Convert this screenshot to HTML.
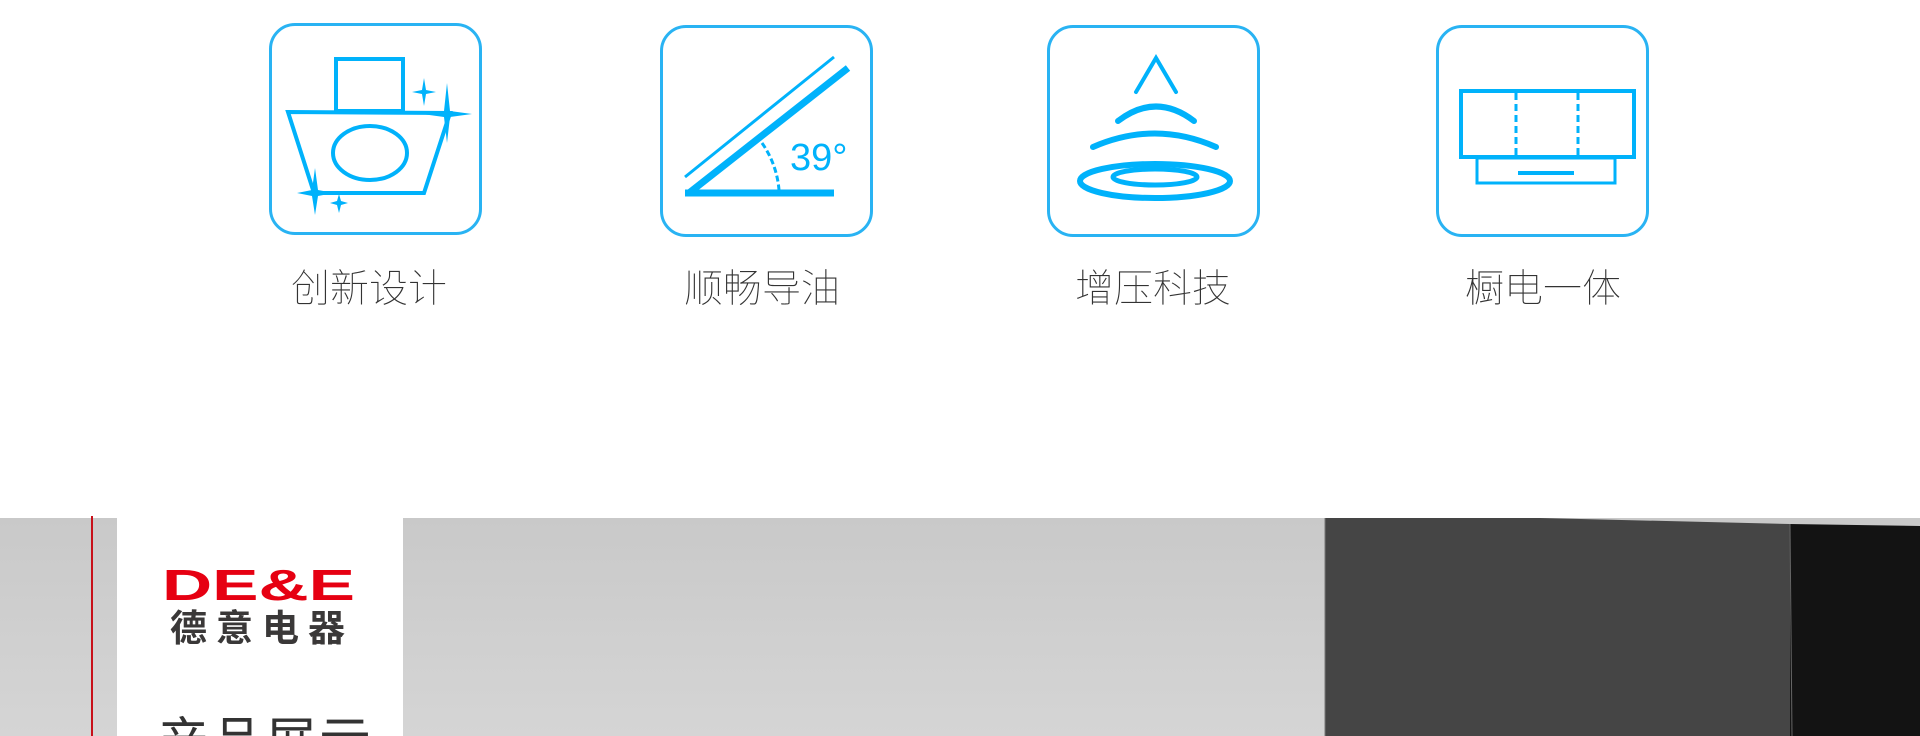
<!DOCTYPE html>
<html><head><meta charset="utf-8"><style>
html,body{margin:0;padding:0;width:1920px;height:736px;overflow:hidden;background:#fff;position:relative;font-family:"Liberation Sans","Noto Sans CJK SC",sans-serif}
.box{position:absolute;width:213px;height:212px;border:3px solid #29b3f3;border-radius:26px;box-sizing:border-box}
.lbl{position:absolute;width:260px;text-align:center;font-size:39px;font-weight:100;color:#333;line-height:40px;top:266px;font-family:"Noto Sans CJK SC","WenQuanYi Zen Hei",sans-serif}
</style></head><body>
<div class="box" style="left:269px;top:23px"></div>
<div class="box" style="left:660px;top:25px"></div>
<div class="box" style="left:1047px;top:25px"></div>
<div class="box" style="left:1436px;top:25px"></div>
<div class="lbl" style="left:239px">创新设计</div>
<div class="lbl" style="left:632px">顺畅导油</div>
<div class="lbl" style="left:1023px">增压科技</div>
<div class="lbl" style="left:1413px">橱电一体</div>
<svg width="1920" height="260" style="position:absolute;left:0;top:0" fill="none" stroke="#00b2fb">
<g stroke-width="4">
<rect x="336" y="59" width="67" height="52"/>
<path d="M288 112 L450 113 L424 193 L314 193 Z"/>
<ellipse cx="370" cy="153" rx="37" ry="27"/>
</g>
<g fill="#00b2fb" stroke="none">
<path d="M447 83 L450 111 L472 114 L450 117 L447 143 L444 117 L422 114 L444 111 Z"/>
<path d="M424 78 L426 90 L436 92 L426 94 L424 106 L422 94 L412 92 L422 90 Z"/>
<path d="M315 168 L318 190 L334 193 L318 196 L315 215 L312 196 L297 193 L312 190 Z"/>
<path d="M339 194 L341 201 L348 203 L341 205 L339 213 L337 205 L330 203 L337 201 Z"/>
</g>
<path d="M685 177 L834 57" stroke-width="3"/>
<path d="M689 193 L848 68" stroke-width="7"/>
<path d="M685 193 L834 193" stroke-width="7"/>
<path d="M762 143 A95 95 0 0 1 779 190" stroke-width="3" stroke-dasharray="6 3"/>
<text x="790" y="170" fill="#00b2fb" stroke="none" font-size="38" font-family="Liberation Sans,sans-serif">39°</text>
<path d="M1136 92 L1156 58 L1176 92" stroke-width="4" stroke-linecap="round"/>
<path d="M1118 121 Q1156 92 1194 121" stroke-width="6" stroke-linecap="round"/>
<path d="M1093 147 Q1155 120 1216 147" stroke-width="6" stroke-linecap="round"/>
<ellipse cx="1155" cy="181" rx="75" ry="17" stroke-width="6"/>
<ellipse cx="1155" cy="177" rx="42" ry="8" stroke-width="5"/>
<rect x="1461" y="91" width="173" height="66" stroke-width="4"/>
<path d="M1516 93 V155 M1578 93 V155" stroke-width="3" stroke-dasharray="7 4"/>
<rect x="1477" y="158" width="138" height="25" stroke-width="3"/>
<path d="M1518 173 H1574" stroke-width="4"/>
</svg>
<div style="position:absolute;left:0;top:518px;width:1920px;height:218px;background:linear-gradient(#c9c9c9,#d5d5d5)"></div>
<div style="position:absolute;left:91px;top:516px;width:2px;height:220px;background:#c8101a"></div>
<div style="position:absolute;left:117px;top:518px;width:286px;height:218px;background:#fff"></div>
<svg width="1920" height="736" style="position:absolute;left:0;top:0">
<polygon points="1325,518 1540,518 1790,524 1790,736 1325,736" fill="#454545"/>
<polygon points="1790,524 1920,526 1920,736 1790,736" fill="#131313"/>
<line x1="1325" y1="518" x2="1325" y2="736" stroke="#777" stroke-width="1"/>
<line x1="1790" y1="524" x2="1792" y2="736" stroke="#666" stroke-width="1"/>
<text x="162" y="600" fill="#e60012" font-size="44" font-weight="bold" font-family="Liberation Sans,sans-serif" textLength="193" lengthAdjust="spacingAndGlyphs">DE&amp;E</text>
</svg>
<div style="position:absolute;left:170px;top:605px;font-size:37px;font-weight:bold;color:#3a3838;letter-spacing:9px;line-height:40px;font-family:'Noto Sans CJK SC',sans-serif">德意电器</div>
<div style="position:absolute;left:157px;top:708px;font-size:52px;color:#333;letter-spacing:2px;line-height:60px;font-family:'Noto Sans CJK SC',sans-serif">产品展示</div>
</body></html>
